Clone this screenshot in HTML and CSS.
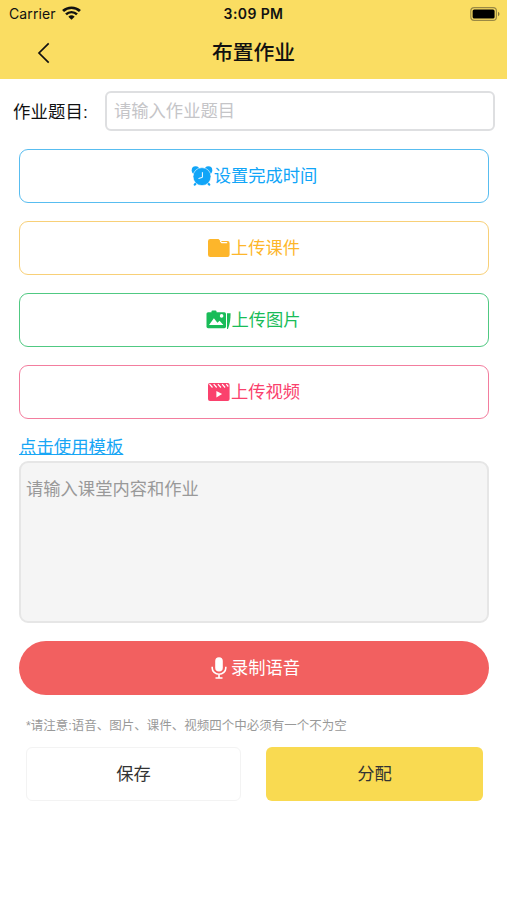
FILE: index.html
```html
<!DOCTYPE html>
<html lang="zh-CN">
<head>
    <meta charset="UTF-8">
    <meta name="viewport" content="width=device-width, initial-scale=1.0">
    <title>布置作业</title>
    <link rel="stylesheet" href="styles.css">
</head>
<body>
    <header class="header">
        <div class="status-bar">
            <div class="carrier">
                <span>Carrier</span>
                <svg class="wifi" viewBox="0 0 18 14" width="19" height="14" preserveAspectRatio="none">
                    <path d="M1 5a11.400 11.400 0 0 1 16 0" fill="none" stroke="#111" stroke-width="2.600"/>
                    <path d="M3.800 8.300a7.300 7.300 0 0 1 10.400 0" fill="none" stroke="#111" stroke-width="2.400"/>
                    <path d="M9 13.800L6 10.800a4.300 4.300 0 0 1 6 0z" fill="#111"/>
                </svg>
            </div>
            <div class="time">3:09 PM</div>
            <svg class="battery" viewBox="0 0 30 14" width="30" height="14">
                <rect x="0.8" y="0.7" width="25.6" height="12.6" rx="3.4" fill="none" stroke="#9a8944" stroke-width="1.2"/>
                <rect x="2.6" y="2.5" width="22" height="9" rx="1.6" fill="#000"/>
                <path d="M28 4.8c2 .8 2 3.6 0 4.4z" fill="#85763a"/>
            </svg>
        </div>
        <div class="nav-bar">
            <svg class="back" viewBox="0 0 14 22" width="14" height="22">
                <path d="M11.7 1.4L2 11l9.7 9.6" fill="none" stroke="#111" stroke-width="1.7"/>
            </svg>
            <h1 class="title">布置作业</h1>
        </div>
    </header>
    <main class="content">
        <div class="subject">
            <label class="subject-label" for="subject">作业题目:</label>
            <input class="subject-input" id="subject" type="text" placeholder="请输入作业题目">
        </div>
        <button class="option option-time">
            <svg viewBox="0 0 22 20" width="22" height="20">
                <circle cx="4.600" cy="4.200" r="3.900" fill="currentColor"/>
                <circle cx="17.400" cy="4.200" r="3.900" fill="currentColor"/>
                <path d="M5.500 16.500l-1.700 2.200M16.500 16.500l1.700 2.200" stroke="currentColor" stroke-width="2.200" stroke-linecap="round"/>
                <circle cx="11" cy="10.600" r="9" fill="currentColor" stroke="#fff" stroke-width=".6"/>
                <path d="M11.400 6.200v5.200L7.500 12.500" fill="none" stroke="#fff" stroke-width="1"/>
            </svg>
            <span class="option-text">设置完成时间</span>
        </button>
        <button class="option option-file">
            <svg viewBox="0 0 24 20" width="24" height="20">
                <path d="M3.200 1h8.300l2 2.100h6.900a2.200 2.200 0 0 1 2.200 2.200v11.400a2.200 2.200 0 0 1-2.200 2.200H3.200A2.200 2.200 0 0 1 1 16.700V3.200A2.200 2.200 0 0 1 3.200 1z" fill="currentColor"/>
                <path d="M13.500 3.400l1.200 1.300h5" fill="none" stroke="#fff" stroke-width="1.200" stroke-linecap="round"/>
            </svg>
            <span class="option-text">上传课件</span>
        </button>
        <button class="option option-image">
            <svg viewBox="0 0 25 20" width="25" height="20">
                <path d="M5.500 3V1.500q0-1 1-1h3q1 0 1 1V3" fill="currentColor"/>
                <rect x="0.500" y="2.200" width="19.500" height="16" rx="1.600" fill="currentColor"/>
                <path d="M3 15l4.900-6.800 3.500 4.500 2.200-2 3.800 4.300z" fill="#fff"/>
                <circle cx="15.600" cy="5.900" r="1.800" fill="#fff"/>
                <path d="M21 3.200h3.600c0 5-.6 11-2.700 15.800H21z" fill="currentColor"/>
            </svg>
            <span class="option-text">上传图片</span>
        </button>
        <button class="option option-video">
            <svg viewBox="0 0 24 20" width="24" height="20">
                <rect x="1" y="1" width="21.600" height="18" rx="2" fill="currentColor"/>
                <path d="M2.500 2.200l3 3.300M6.700 2.200l3 3.300M10.900 2.200l3 3.300M15.100 2.200l3 3.300M19.300 2.200l2 2.300" stroke="#fff" stroke-width="1.200"/>
                <path d="M9.400 8.900l5.700 3.200-5.700 3.300z" fill="#fff"/>
            </svg>
            <span class="option-text">上传视频</span>
        </button>
        <a class="template-link" href="#">点击使用模板</a>
        <textarea class="homework" placeholder="请输入课堂内容和作业"></textarea>
        <button class="record">
            <svg viewBox="0 0 16 22" width="16" height="22">
                <rect x="4.200" y="0.300" width="7.600" height="14.200" rx="3.800" fill="#fff"/>
                <path d="M1.200 9.800v1.200a6.800 6.300 0 0 0 13.600 0V9.800M8 17.300v3.500M4.500 21h7" fill="none" stroke="#fff" stroke-width="1.600"/>
            </svg>
            <span class="option-text">录制语音</span>
        </button>
        <p class="notice">*请注意:语音、图片、课件、视频四个中必须有一个不为空</p>
        <div class="actions">
            <button class="action save">保存</button>
            <button class="action assign">分配</button>
        </div>
    </main>
</body>
</html>
```
FILE: styles.css
```css
* {
    box-sizing: border-box;
}
body {
    margin: 0;
    background-color: #fff;
    color: #222;
    font-family: "Liberation Sans", "Noto Sans CJK SC", sans-serif;
}
button, input, textarea {
    font-family: inherit;
}
.header {
    height: 79px;
    background-color: #fadd62;
}
.status-bar {
    display: grid;
    grid-template-columns: 1fr auto 1fr;
    align-items: center;
    height: 27px;
    padding: 0 7px 0 9px;
    color: #111;
}
.carrier {
    display: flex;
    align-items: center;
    gap: 6px;
    font-family: Inter, sans-serif;
    font-size: 14px;
    letter-spacing: 0.1px;
}
.wifi {
    margin-top: -2px;
}
.time {
    font-family: Inter, sans-serif;
    font-size: 14px;
    font-weight: 600;
    letter-spacing: 0.4px;
    margin-left: -2px;
}
.battery {
    justify-self: end;
}
.nav-bar {
    display: grid;
    grid-template-columns: 1fr auto 1fr;
    align-items: center;
    height: 50px;
    padding-top: 1px;
}
.back {
    margin-left: 37px;
}
.title {
    margin: 0;
    padding-top: 1px;
    font-size: 20.8px;
    font-weight: 500;
    line-height: 30px;
    color: #111;
}
.content {
    display: flex;
    flex-direction: column;
    padding: 12px 18px 0 19px;
}
.subject {
    display: flex;
    align-items: center;
    margin: 0 -6px;
}
.subject-label {
    width: 92px;
    padding-bottom: 2px;
    font-size: 17.4px;
    letter-spacing: 0.1px;
    color: #111;
    white-space: nowrap;
}
.subject-input {
    flex: 1;
    min-width: 0;
    height: 40px;
    padding: 0 7px;
    border: 2px solid #dedfe1;
    border-radius: 6px;
    font-size: 17.3px;
}
.subject-input::placeholder {
    color: #c5c5c8;
}
.option {
    display: flex;
    justify-content: center;
    align-items: center;
    height: 54px;
    margin-top: 18px;
    padding: 0 1px 1px 0;
    background-color: #fff;
    border: 1.5px solid;
    border-radius: 9px;
    font-size: 17.3px;
}
.option-text {
    padding-bottom: 2px;
}
.option-time {
    gap: 1px;
    padding-right: 0;
    border-color: #58bdf0;
    color: #10a5f8;
}
.option-file {
    border-color: #f8d078;
    color: #fdb62b;
}
.option-image {
    border-color: #50c982;
    color: #19bc58;
}
.option-video {
    border-color: #f37d9e;
    color: #fa416d;
}
.template-link {
    align-self: flex-start;
    margin-top: 14px;
    font-size: 17.4px;
    line-height: 28px;
    color: #18a6f5;
}
.homework {
    height: 162px;
    padding: 13px 5px;
    background-color: #f5f5f5;
    border: 2px solid #e6e6e6;
    border-radius: 9px;
    font-size: 17.3px;
    line-height: 26px;
    resize: none;
}
.homework::placeholder {
    color: #999;
}
.record {
    display: flex;
    justify-content: center;
    align-items: center;
    gap: 4px;
    height: 54px;
    margin-top: 18px;
    padding: 0 0 1px 3px;
    background-color: #f26060;
    border: none;
    border-radius: 27px;
    color: #fff;
    font-size: 17.3px;
}
.notice {
    margin: 21px 0 0 7px;
    font-size: 12.5px;
    line-height: 20px;
    color: #999;
}
.actions {
    display: grid;
    grid-template-columns: 215px 217px;
    gap: 25px;
    margin: 11px 0 0 7px;
}
.action {
    height: 54px;
    padding: 0 0 3px;
    border: none;
    border-radius: 6px;
    font-size: 17.3px;
    color: #333;
}
.save {
    background-color: #fff;
    border: 1px solid #f3f3f3;
}
.assign {
    background-color: #f9da51;
}
```
